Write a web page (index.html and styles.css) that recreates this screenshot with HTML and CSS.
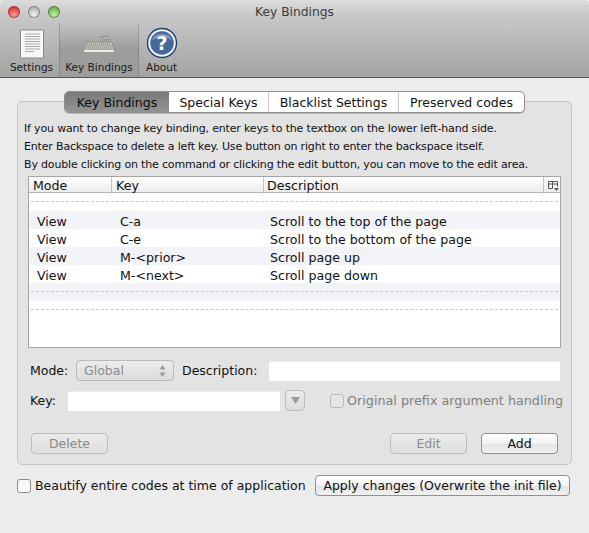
FILE: index.html
```html
<!DOCTYPE html>
<html lang="en">
<head>
    <meta charset="UTF-8">
    <title>Key Bindings</title>
    <link rel="stylesheet" href="styles.css">
</head>
<body>
    <div class="window">
        <header class="titlebar">
            <div class="title-row">
                <div class="lights">
                    <span class="light light-red"></span>
                    <span class="light light-grey"></span>
                    <span class="light light-green"></span>
                </div>
                <div class="window-title">Key Bindings</div>
            </div>
            <nav class="toolbar">
                <div class="tool tool-settings">
                    <svg width="26" height="30" viewBox="0 0 26 30">
                        <rect x="1.500" y="1" width="23" height="28" fill="#f7f7f5" stroke="#8a8a8a"/>
                        <path d="M6 5h15M6 7.500h15M6 10h15M6 12.500h15M6 15h15M6 17.500h15M6 20h15M6 22.500h9" stroke="#a8a8a8" fill="none"/>
                    </svg>
                    <span>Settings</span>
                </div>
                <div class="tool tool-active tool-keys">
                    <svg width="32" height="30" viewBox="0 0 32 30">
                        <path d="M16 9c0-2 10-1 10-3M19 11c4 0 8 0 9-1" stroke="#8c8c8c" fill="none"/>
                        <path d="M3 13h26l2 8H1z" fill="#c6c5be" stroke="#77766f" stroke-width=".6"/>
                        <path d="M4 15h24M3.500 17h25M3 19h26" stroke="#6f6f6a" stroke-dasharray="1 1"/>
                        <rect x="1" y="21" width="30" height="2" fill="#ecebe6"/>
                    </svg>
                    <span>Key Bindings</span>
                </div>
                <div class="tool tool-about">
                    <svg width="32" height="32" viewBox="0 0 32 32">
                        <circle cx="16" cy="16" r="15.200" fill="#1f3f78"/>
                        <circle cx="16" cy="16" r="13.800" fill="#f2f4f8"/>
                        <circle cx="16" cy="16" r="11.800" fill="#46689f"/>
                        <path d="M6 13a10.500 9 0 0 1 20 0c-6-3-14-3-20 0z" fill="#7d9ac4"/>
                        <text x="16" y="22.500" text-anchor="middle" class="help-mark">?</text>
                    </svg>
                    <span>About</span>
                </div>
            </nav>
        </header>

        <main class="content">
            <div class="tabs">
                <div class="tab tab-active">Key Bindings</div>
                <div class="tab tab-special">Special Keys</div>
                <div class="tab tab-blacklist">Blacklist Settings</div>
                <div class="tab tab-preserved">Preserved codes</div>
            </div>

            <section class="panel">
                <p class="intro">If you want to change key binding, enter keys to the textbox on the lower left-hand side.</p>
                <p class="intro">Enter Backspace to delete a left key. Use button on right to enter the backspace itself.</p>
                <p class="intro">By double clicking on the command or clicking the edit button, you can move to the edit area.</p>

                <div class="table">
                    <div class="table-head">
                        <div class="th th-mode">Mode</div>
                        <div class="th th-key">Key</div>
                        <div class="th th-desc">Description</div>
                        <div class="th th-corner">
                            <svg width="12" height="11" viewBox="0 0 12 11">
                                <path d="M1.500 8.500v-7h9v5M1.500 4h9M5.500 1.500v7M1.500 8.500h4" fill="none" stroke="#555"/>
                                <path d="M7 8h5l-2.500 3z" fill="#555"/>
                            </svg>
                        </div>
                    </div>
                    <div class="row row-sep"><span class="dash"></span></div>
                    <div class="row row-alt"><span>View</span><span>C-a</span><span>Scroll to the top of the page</span></div>
                    <div class="row"><span>View</span><span>C-e</span><span>Scroll to the bottom of the page</span></div>
                    <div class="row row-alt"><span>View</span><span>M-&lt;prior&gt;</span><span>Scroll page up</span></div>
                    <div class="row"><span>View</span><span>M-&lt;next&gt;</span><span>Scroll page down</span></div>
                    <div class="row row-alt row-sep"><span class="dash"></span></div>
                    <div class="row row-sep"><span class="dash"></span></div>
                </div>

                <div class="form-row form-row-mode">
                    <label class="label label-mode">Mode:</label>
                    <div class="select">
                        <span>Global</span>
                        <svg width="7" height="12" viewBox="0 0 7 12"><path d="M3.500 0l3 4.500h-6zM3.500 12l-3-4.500h6z" fill="#9a9a9a"/></svg>
                    </div>
                    <label class="label label-desc">Description:</label>
                    <div class="textbox textbox-desc"></div>
                </div>

                <div class="form-row form-row-key">
                    <label class="label label-key">Key:</label>
                    <div class="textbox textbox-key"></div>
                    <div class="drop"><svg width="9" height="7" viewBox="0 0 9 7"><path d="M0 0h9L4.500 7z" fill="#9a9a9a"/></svg></div>
                    <span class="check check-disabled"></span>
                    <span class="check-label">Original prefix argument handling</span>
                </div>

                <div class="form-row form-row-buttons">
                    <button class="btn btn-disabled">Delete</button>
                    <span class="spacer"></span>
                    <button class="btn btn-disabled">Edit</button>
                    <button class="btn btn-add">Add</button>
                </div>
            </section>

            <div class="footer-row">
                <span class="check"></span>
                <span class="beautify">Beautify entire codes at time of application</span>
                <button class="btn btn-apply">Apply changes (Overwrite the init file)</button>
            </div>
        </main>
    </div>
</body>
</html>
```

FILE: styles.css
```css
html, body {
    margin: 0;
    padding: 0;
}
body {
    width: 589px;
    height: 533px;
    overflow: hidden;
    background: #ececec;
    font-family: "DejaVu Sans", sans-serif;
    font-size: 12.500px;
    color: #111;
}
.window {
    height: 533px;
    border-radius: 5px 5px 0 0;
    overflow: hidden;
}

/* title bar and toolbar */
.titlebar {
    height: 77px;
    background: linear-gradient(#dcdcdc 0%, #c8c8c8 20%, #a3a3a3 100%);
    border-bottom: 1px solid #565656;
}
.title-row {
    display: flex;
    height: 23px;
    align-items: center;
    position: relative;
}
.lights {
    display: flex;
    gap: 8px;
    padding-left: 8px;
    padding-top: 1px;
}
.light {
    width: 12px;
    height: 12px;
    border-radius: 50%;
    box-shadow: inset 0 0 0 1px rgba(60,60,60,0.45);
}
.light-red { background: radial-gradient(circle at 50% 75%, #ff9c96, #d93a35 70%); }
.light-grey { background: radial-gradient(circle at 50% 75%, #f2f2f2, #b4b4b4 70%); }
.light-green { background: radial-gradient(circle at 50% 75%, #c8f0a2, #6cb248 70%); }
.window-title {
    position: absolute;
    left: 0;
    right: 0;
    text-align: center;
    font-size: 12.300px;
    color: #3c3c3c;
}
.toolbar {
    display: flex;
    height: 54px;
    padding-left: 4px;
}
.tool {
    display: flex;
    flex-direction: column;
    align-items: center;
    justify-content: flex-end;
    font-size: 10.500px;
    padding-bottom: 4px;
    box-sizing: border-box;
    color: #1c1c1c;
}
.tool svg {
    display: block;
    margin-bottom: 2px;
}
.tool-settings { width: 55px; }
.tool-keys { width: 80px; }
.tool-about { width: 45px; }
.tool-active {
    background: linear-gradient(rgba(0,0,0,0), rgba(0,0,0,0.13) 50%, rgba(0,0,0,0.03));
    border-left: 1px solid rgba(90,90,90,0.3);
    border-right: 1px solid rgba(90,90,90,0.3);
}

/* tabs and panel */
.content {
    padding: 13px 17px 0;
}
.tabs {
    display: flex;
    width: 461px;
    height: 22px;
    margin-left: 47px;
    margin-bottom: -12px;
    position: relative;
    box-sizing: border-box;
    background: #fff;
    border: 1px solid #8f8f8f;
    border-radius: 5px;
    box-shadow: 0 1px 0 #bbb;
    overflow: hidden;
}
.tab {
    display: flex;
    align-items: center;
    justify-content: center;
    font-size: 12.500px;
    border-right: 1px solid #c9c9c9;
    box-sizing: border-box;
}
.tab-active {
    width: 104px;
    background: linear-gradient(#7a7a7a, #939393);
    border-right: 0;
    color: #0b0b0b;
}
.tab-special { width: 100px; }
.tab-blacklist { width: 130px; }
.tab-preserved { flex: 1; border-right: 0; }
.panel {
    height: 364px;
    box-sizing: border-box;
    background: #e3e3e3;
    border: 1px solid #c6c6c6;
    border-radius: 5px;
    padding: 18px 10px 0;
}
.intro {
    margin: 0 0 0 -4px;
    height: 18px;
    line-height: 18px;
    font-size: 11px;
    letter-spacing: -0.17px;
    white-space: nowrap;
    color: #111;
}

/* key table */
.table {
    height: 172px;
    width: 533px;
    margin-top: 2px;
    box-sizing: border-box;
    background: #fff;
    border: 1px solid #a5a5a5;
    font-size: 12.600px;
}
.table-head {
    display: grid;
    grid-template-columns: 82px 152px 280px 1fr;
    height: 15px;
    background: linear-gradient(#ffffff, #ececec);
    border-bottom: 1px solid #b4b4b4;
}
.th {
    line-height: 17px;
    padding-left: 4px;
    border-left: 1px solid #c4c4c4;
}
.th-mode { border-left: 0; }
.th-desc { padding-left: 3px; }
.th-corner {
    padding-left: 3px;
    display: flex;
    align-items: center;
}
.row {
    display: grid;
    grid-template-columns: 83px 150px 1fr;
    height: 18px;
    line-height: 22px;
    padding-left: 8px;
    box-sizing: border-box;
    white-space: nowrap;
}
.row-alt {
    background: #f2f3f7;
}
.row-sep {
    display: flex;
    align-items: center;
    padding: 0 2px;
}
.row .dash {
    width: 100%;
    height: 0;
    margin-top: -1px;
    border-top: 1px dashed #c8c8c8;
}

/* edit form */
.form-row {
    display: flex;
    align-items: center;
}
.form-row > * {
    flex: none;
}
.form-row-mode {
    margin-top: 12px;
    height: 21px;
    padding-left: 2px;
}
.form-row-key {
    margin-top: 9px;
    height: 21px;
    padding-left: 2px;
}
.form-row-buttons {
    margin-top: 22px;
    height: 21px;
    padding-left: 3px;
    padding-right: 3px;
}
.label-mode { width: 46px; }
.label-desc { width: 87px; margin-left: 8px; }
.label-key { width: 38px; }
.select {
    display: flex;
    align-items: center;
    justify-content: space-between;
    width: 98px;
    height: 21px;
    box-sizing: border-box;
    padding: 0 7px 0 7px;
    border: 1px solid #b9b9b9;
    border-radius: 4px;
    background: linear-gradient(#ececec, #dcdcdc);
    color: #8a8a8a;
}
.textbox {
    height: 20px;
    background: #fff;
    border-top: 1px solid #ececec;
    box-sizing: border-box;
}
.textbox-desc { width: 291px; }
.textbox-key { width: 212px; }
.drop {
    display: flex;
    align-items: center;
    justify-content: center;
    width: 20px;
    height: 21px;
    margin-left: 5px;
    box-sizing: border-box;
    border: 1px solid #bcbcbc;
    border-radius: 4px;
    background: linear-gradient(#ececec, #dcdcdc);
}
.check {
    flex: none;
    display: block;
    width: 14px;
    height: 14px;
    box-sizing: border-box;
    border: 1px solid #8d8d8d;
    border-radius: 3px;
    background: linear-gradient(#f4f4f4, #ffffff);
}
.check-disabled {
    margin-left: 25px;
    border-color: #bababa;
    background: #e6e6e6;
}
.check-label {
    margin-left: 3px;
    font-size: 12.750px;
    color: #808080;
    white-space: nowrap;
}
.form-row .spacer {
    flex: 1;
}
.btn {
    font-family: inherit;
    font-size: 12.500px;
    height: 21px;
    width: 77px;
    padding: 0;
    box-sizing: border-box;
    border: 1px solid #8f8f8f;
    border-radius: 4px;
    background: linear-gradient(#ffffff, #f2f2f2 50%, #e4e4e4 55%, #f2f2f2);
    color: #111;
}
.btn-disabled {
    border-color: #bdbdbd;
    background: linear-gradient(#ebebeb, #dedede);
    color: #8a8a8a;
}
.btn-add {
    margin-left: 14px;
}

/* below the panel */
.footer-row {
    display: flex;
    align-items: center;
    margin-top: 10px;
    height: 21px;
}
.beautify {
    margin-left: 4px;
    white-space: nowrap;
}
.btn-apply {
    width: 255px;
    margin-left: auto;
    margin-right: 2px;
    white-space: nowrap;
}
.help-mark {
    font-family: "DejaVu Sans", sans-serif;
    font-size: 19px;
    font-weight: bold;
    fill: #fff;
}
```
